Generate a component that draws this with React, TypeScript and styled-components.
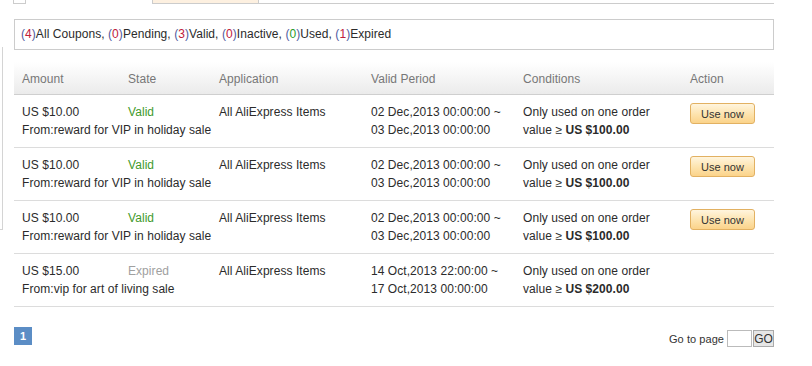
import React from "react";
import styled, { createGlobalStyle } from "styled-components";

const Global = createGlobalStyle`
  html, body { margin: 0; padding: 0; background: #fff; }
  body { font-family: "Liberation Sans", Arial, sans-serif; font-size: 12px; color: #2b2b2b; letter-spacing: 0.06px; }
`;

const Wrapper = styled.div`
  display: flex;
  align-items: flex-start;
  width: 812px;
  height: 366px;
  overflow: hidden;
`;

const Rail = styled.div`
  width: 2px;
  height: 182px;
  margin-top: 47px;
  border-right: 1px solid #d4d4d4;
  border-bottom: 1px solid #d4d4d4;
  flex-shrink: 0;
`;

const Main = styled.div`
  margin-left: 11px;
  width: 760px;
  display: flex;
  flex-direction: column;
`;

const TabStrip = styled.div`
  display: flex;
  height: 4px;
  margin-left: -1px;
`;

const TabStub = styled.div`
  width: 11px;
  border: 1px solid #ccc;
  border-top: none;
`;

const ActiveTab = styled.div`
  width: 126px;
`;

const PeachTab = styled.div`
  width: 105px;
  background: #fdf0e0;
  border: 1px solid #ccc;
  border-top: none;
`;

const TabLine = styled.div`
  flex: 1;
  border-bottom: 1px solid #ccc;
`;

const FilterBox = styled.div`
  margin-top: 15px;
  height: 29px;
  line-height: 29px;
  border: 1px solid #ccc;
  padding-left: 6px;
  white-space: nowrap;
`;

const Paren = styled.span`
  color: #4f5aa0;
`;

const Count = styled.span<{ $green?: boolean }>`
  color: ${(p) => (p.$green ? "#2a9a2a" : "#c0203a")};
`;

const Table = styled.div`
  margin-top: 12px;
  display: flex;
  flex-direction: column;
`;

const cols = "106px 91px 152px 152px 167px 1fr";

const HeaderRow = styled.div`
  display: grid;
  grid-template-columns: ${cols};
  height: 32px;
  align-items: center;
  background: linear-gradient(to bottom, #ffffff 0%, #f6f6f6 45%, #ebebeb 100%);
  border-bottom: 1px solid #cfcfcf;
  color: #777;
`;

const HeadCell = styled.div`
  padding-left: 8px;
  padding-top: 1px;
`;

const Row = styled.div`
  display: grid;
  grid-template-columns: ${cols};
  height: 52px;
  border-bottom: 1px solid #dcdcdc;
  line-height: 18px;
`;

const Cell = styled.div`
  padding: 8px 0 0 8px;
  white-space: nowrap;
  overflow: visible;
`;

const State = styled(Cell)<{ $expired?: boolean }>`
  color: ${(p) => (p.$expired ? "#a0a0a0" : "#3f9a2c")};
`;

const ActionCell = styled.div`
  padding: 8px 0 0 8px;
`;

const UseNow = styled.button`
  width: 65px;
  height: 21px;
  padding: 0;
  border: 1px solid #e2b162;
  border-radius: 3px;
  background: linear-gradient(to bottom, #fff5de 0%, #fde3ad 55%, #fbd38a 100%);
  font-family: "Liberation Sans", Arial, sans-serif;
  font-size: 11px;
  color: #333;
  cursor: pointer;
`;

const Pager = styled.div`
  margin-top: 17px;
  display: flex;
  justify-content: space-between;
  align-items: center;
`;

const PageNum = styled.div`
  width: 18px;
  height: 18px;
  background: #5b8dc5;
  color: #fff;
  font-size: 11px;
  font-weight: bold;
  display: flex;
  align-items: center;
  justify-content: center;
`;

const GoTo = styled.div`
  display: flex;
  align-items: center;
  margin-top: 6px;
  font-size: 11px;
  color: #333;
`;

const GoLabel = styled.span`
  margin-right: 3px;
`;

const PageInput = styled.input`
  width: 23px;
  height: 15px;
  padding: 0;
  margin: 0;
  border: 1px solid #bbb;
  box-sizing: content-box;
`;

const GoButton = styled.button`
  height: 17px;
  width: 21px;
  padding: 0;
  margin: 0 0 0 1px;
  border: 1px solid #aaa;
  background: #e6e6e6;
  font-family: "Liberation Sans", Arial, sans-serif;
  font-size: 12px;
  color: #333;
`;

type Coupon = {
  amount: string;
  from: string;
  state: "Valid" | "Expired";
  start: string;
  end: string;
  min: string;
};

const coupons: Coupon[] = [
  { amount: "US $10.00", from: "From:reward for VIP in holiday sale", state: "Valid", start: "02 Dec,2013 00:00:00 ~", end: "03 Dec,2013 00:00:00", min: "US $100.00" },
  { amount: "US $10.00", from: "From:reward for VIP in holiday sale", state: "Valid", start: "02 Dec,2013 00:00:00 ~", end: "03 Dec,2013 00:00:00", min: "US $100.00" },
  { amount: "US $10.00", from: "From:reward for VIP in holiday sale", state: "Valid", start: "02 Dec,2013 00:00:00 ~", end: "03 Dec,2013 00:00:00", min: "US $100.00" },
  { amount: "US $15.00", from: "From:vip for art of living sale", state: "Expired", start: "14 Oct,2013 22:00:00 ~", end: "17 Oct,2013 00:00:00", min: "US $200.00" },
];

const filters: { n: number; label: string; green?: boolean }[] = [
  { n: 4, label: "All Coupons" },
  { n: 0, label: "Pending" },
  { n: 3, label: "Valid" },
  { n: 0, label: "Inactive" },
  { n: 0, label: "Used", green: true },
  { n: 1, label: "Expired" },
];

export default function App() {
  return (
    <>
      <Global />
      <Wrapper>
        <Rail />
        <Main>
          <TabStrip>
            <TabStub />
            <ActiveTab />
            <PeachTab />
            <TabLine />
          </TabStrip>
          <FilterBox>
            {filters.map((f, i) => (
              <React.Fragment key={f.label}>
                <Paren>(</Paren>
                <Count $green={f.green}>{f.n}</Count>
                <Paren>)</Paren>
                {f.label}
                {i < filters.length - 1 ? ", " : ""}
              </React.Fragment>
            ))}
          </FilterBox>
          <Table>
            <HeaderRow>
              <HeadCell>Amount</HeadCell>
              <HeadCell>State</HeadCell>
              <HeadCell>Application</HeadCell>
              <HeadCell>Valid Period</HeadCell>
              <HeadCell>Conditions</HeadCell>
              <HeadCell>Action</HeadCell>
            </HeaderRow>
            {coupons.map((c, i) => (
              <Row key={i}>
                <Cell>
                  {c.amount}
                  <br />
                  {c.from}
                </Cell>
                <State $expired={c.state === "Expired"}>{c.state}</State>
                <Cell>All AliExpress Items</Cell>
                <Cell>
                  {c.start}
                  <br />
                  {c.end}
                </Cell>
                <Cell>
                  Only used on one order
                  <br />
                  value ≥ <b>{c.min}</b>
                </Cell>
                <ActionCell>{c.state === "Valid" && <UseNow>Use now</UseNow>}</ActionCell>
              </Row>
            ))}
          </Table>
          <Pager>
            <PageNum>1</PageNum>
            <GoTo>
              <GoLabel>Go to page</GoLabel>
              <PageInput />
              <GoButton>GO</GoButton>
            </GoTo>
          </Pager>
        </Main>
      </Wrapper>
    </>
  );
}
